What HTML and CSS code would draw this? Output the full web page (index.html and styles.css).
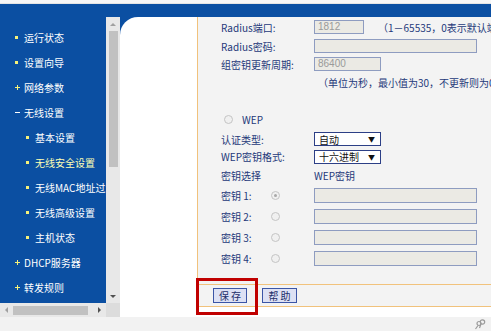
FILE: index.html
```html
<!DOCTYPE html>
<html lang="zh-CN">
<head>
    <meta charset="UTF-8">
    <title>无线安全设置</title>
    <link rel="stylesheet" href="styles.css">
</head>
<body>
<div class="topline"></div>
<div class="frame">
    <div class="side">
        <div class="side-main">
            <ul class="nav">
                <li class="lvl1"><span class="dot"></span>运行状态</li>
                <li class="lvl1"><span class="dot"></span>设置向导</li>
                <li class="lvl1"><span class="plus"></span>网络参数</li>
                <li class="lvl1"><span class="minus"></span>无线设置</li>
                <li class="lvl2"><span class="dot"></span>基本设置</li>
                <li class="lvl2 active"><span class="dot"></span>无线安全设置</li>
                <li class="lvl2"><span class="dot"></span>无线MAC地址过滤</li>
                <li class="lvl2"><span class="dot"></span>无线高级设置</li>
                <li class="lvl2"><span class="dot"></span>主机状态</li>
                <li class="lvl1"><span class="plus"></span>DHCP服务器</li>
                <li class="lvl1"><span class="plus"></span>转发规则</li>
            </ul>
            <!-- 竖向滚动条 -->
            <div class="vscroll">
                <span class="arr-box"><span class="arr up"></span></span>
                <span class="vthumb"></span>
                <span class="fill"></span>
                <span class="arr-box"><span class="arr down"></span></span>
            </div>
        </div>
        <div class="hscroll">
            <div class="htrack">
                <span class="arr-box h"><span class="arr left"></span></span>
                <span class="hthumb"></span>
                <span class="fill"></span>
                <span class="arr-box h"><span class="arr right"></span></span>
            </div>
            <div class="corner"></div>
        </div>
    </div>
    <div class="gutter"></div>
    <div class="main">
        <div class="form">
            <div class="row r20">
                <span class="lbl">Radius端口:</span>
                <span class="txt w50">1812</span>
                <span class="hint">（1－65535，0表示默认端口1812）</span>
            </div>
            <div class="row r18">
                <span class="lbl">Radius密码:</span>
                <span class="txt w163"></span>
            </div>
            <div class="row r18">
                <span class="lbl">组密钥更新周期:</span>
                <span class="txt w67">86400</span>
            </div>
            <div class="row r18">
                <span class="lbl"></span>
                <span class="note">（单位为秒，最小值为30，不更新则为0）</span>
            </div>
            <div class="gap"></div>
            <div class="row r22 wep">
                <span class="radio"></span>
                <span class="lbl-wep">WEP</span>
            </div>
            <div class="row r18">
                <span class="lbl">认证类型:</span>
                <span class="sel">自动<i>▼</i></span>
            </div>
            <div class="row r17">
                <span class="lbl">WEP密钥格式:</span>
                <span class="sel">十六进制<i>▼</i></span>
            </div>
            <div class="row r20">
                <span class="lbl">密钥选择</span>
                <span>WEP密钥</span>
            </div>
            <div class="row key">
                <span class="lbl-key">密钥 1:</span>
                <span class="cell"><span class="radio on"></span></span>
                <span class="txt w163 tall"></span>
            </div>
            <div class="row key">
                <span class="lbl-key">密钥 2:</span>
                <span class="cell"><span class="radio"></span></span>
                <span class="txt w163 tall"></span>
            </div>
            <div class="row key">
                <span class="lbl-key">密钥 3:</span>
                <span class="cell"><span class="radio"></span></span>
                <span class="txt w163 tall"></span>
            </div>
            <div class="row key">
                <span class="lbl-key">密钥 4:</span>
                <span class="cell"><span class="radio"></span></span>
                <span class="txt w163 tall"></span>
            </div>
        </div>
        <div class="btnrow">
            <button class="btn">保 存</button>
            <button class="btn">帮 助</button>
        </div>
        <div class="bottom"></div>
    </div>
    <!-- 红框标注 -->
    <div class="mark"></div>
</div>
<div class="status">
    <svg class="pin" width="12" height="11" viewBox="0 0 12 11">
        <circle cx="8.5" cy="3" r="2.2" fill="none" stroke="#9a9a9a" stroke-width="1.2"/>
        <circle cx="5" cy="4.5" r="2" fill="none" stroke="#9a9a9a" stroke-width="1.2"/>
        <path d="M4 6.5 L1.5 10 M7 5 L5.5 9" stroke="#9a9a9a" stroke-width="1.2" fill="none"/>
    </svg>
</div>
</body>
</html>
```

FILE: styles.css
```css
* {
    margin: 0;
    padding: 0;
    box-sizing: border-box;
}
body {
    width: 491px;
    height: 331px;
    overflow: hidden;
    background: #f2f2f2;
    font-family: "Noto Sans CJK SC", sans-serif;
    font-size: 10px;
}
.topline {
    height: 4px;
    background: #f6f6f6;
    border-bottom: 1px solid #e4e4e4;
}
.frame {
    height: 313px;
    display: flex;
    background: #0b4fa2;
    position: relative;
}
/* 左侧菜单 */
.side {
    width: 120px;
    display: flex;
    flex-direction: column;
}
.side-main {
    flex: 1;
    display: flex;
}
.nav {
    width: 106px;
    flex: none;
    list-style: none;
    padding-top: 21px;
    overflow: hidden;
    white-space: nowrap;
    color: #fff;
}
.nav li {
    height: 25px;
    line-height: 25px;
    display: flex;
    align-items: center;
}
.lvl1 { padding-left: 15px; }
.lvl2 { padding-left: 26px; }
.nav .active { color: #ffffb4; }
.dot {
    flex: none;
    width: 3px;
    height: 3px;
    background: #f6f27a;
    margin-right: 6px;
}
.plus, .minus {
    flex: none;
    width: 5px;
    height: 5px;
    margin-right: 4px;
    position: relative;
}
.plus::before, .plus::after, .minus::before {
    content: "";
    position: absolute;
    background: #f6f27a;
}
.plus::before, .minus::before {
    left: 0;
    top: 2px;
    width: 5px;
    height: 1px;
}
.plus::after {
    left: 2px;
    top: 0;
    width: 1px;
    height: 5px;
}
.minus::before { background: #fff; }
/* 滚动条 */
.vscroll {
    width: 14px;
    flex: none;
    margin-top: 13px;
    background: #e8e8e8;
    display: flex;
    flex-direction: column;
    align-items: center;
}
.arr-box {
    flex: none;
    width: 14px;
    height: 14px;
    display: flex;
    align-items: center;
    justify-content: center;
}
.arr-box.h { width: 13px; }
.arr {
    width: 0;
    height: 0;
    border: 3px solid transparent;
}
.arr.up { border-bottom-color: #a0a0a0; border-top-width: 0; }
.arr.down { border-top-color: #505050; border-bottom-width: 0; }
.arr.left { border-right-color: #a0a0a0; border-left-width: 0; }
.arr.right { border-left-color: #505050; border-right-width: 0; }
.vthumb {
    flex: none;
    width: 9px;
    height: 136px;
    background: #c1c1c1;
}
.fill { flex: 1; }
.hscroll {
    height: 14px;
    display: flex;
}
.htrack {
    width: 106px;
    background: #e8e8e8;
    display: flex;
    align-items: center;
}
.hthumb {
    flex: none;
    width: 75px;
    height: 9px;
    background: #c1c1c1;
}
.corner {
    flex: 1;
    background: #dcdcdc;
}
.gutter {
    width: 77px;
    flex: none;
    margin-top: 13px;
    background: #fff;
    border-top-left-radius: 18px;
}
/* 右侧内容 */
.main {
    flex: 1;
    margin-top: 13px;
    display: flex;
    flex-direction: column;
    overflow: hidden;
    white-space: nowrap;
    color: #25397a;
}
.form {
    height: 267px;
    background: #f3f3f3;
    border-left: 1px solid #f1c27c;
    padding-left: 23px;
}
.row {
    display: flex;
    align-items: center;
}
.r17 { height: 17px; }
.r18 { height: 18px; }
.r20 { height: 20px; }
.r22 { height: 22px; }
.key { height: 21px; }
.gap { height: 17px; }
.lbl {
    width: 93px;
    flex: none;
}
.lbl-key {
    width: 50px;
    flex: none;
}
.cell {
    width: 43px;
    flex: none;
}
.txt {
    height: 14px;
    flex: none;
    border: 1px solid #8e9cc0;
    background: #ebeae4;
    color: #9a9a9a;
    font-family: "Liberation Sans", Arial, sans-serif;
    font-size: 10px;
    line-height: 12px;
    padding-left: 3px;
}
.tall { height: 15px; }
.w50 { width: 50px; }
.w67 { width: 67px; }
.w163 { width: 163px; }
.hint { margin-left: 14px; }
.note { padding-left: 4px; }
.wep { padding-left: 3px; }
.lbl-wep { margin-left: 9px; }
.radio {
    display: block;
    flex: none;
    width: 9px;
    height: 9px;
    border-radius: 50%;
    border: 1px solid #c4c4c4;
    background: #f0f0f0;
    position: relative;
}
.radio.on::after {
    content: "";
    position: absolute;
    left: 2px;
    top: 2px;
    width: 3px;
    height: 3px;
    border-radius: 50%;
    background: #a8a8a8;
}
.sel {
    width: 67px;
    height: 14px;
    flex: none;
    display: flex;
    align-items: center;
    justify-content: space-between;
    padding: 0 5px 0 4px;
    background: #fff;
    border: 1px solid #2c3f86;
    color: #111;
}
.sel i {
    font-style: normal;
    font-size: 7px;
}
.btnrow {
    height: 23px;
    background: #f3f3f3;
    border-left: 1px solid #f1c27c;
    border-top: 1px solid #f1c27c;
    border-bottom: 1px solid #f1c27c;
    padding-left: 15px;
    display: flex;
    align-items: center;
    gap: 15px;
}
.btn {
    height: 15px;
    width: 34px;
    background: #dde1f4;
    border: 1px solid #3b55a6;
    color: #1d2f6a;
    font-family: "Noto Sans CJK SC", sans-serif;
    font-size: 10px;
    line-height: 12px;
}
.btn + .btn { width: 35px; }
.bottom {
    flex: 1;
    background: #fff;
}
.mark {
    position: absolute;
    left: 196px;
    top: 274px;
    width: 62px;
    height: 37px;
    border: 3px solid #c00000;
}
.status {
    height: 14px;
    display: flex;
    justify-content: flex-end;
    align-items: center;
    padding-right: 5px;
}
```
